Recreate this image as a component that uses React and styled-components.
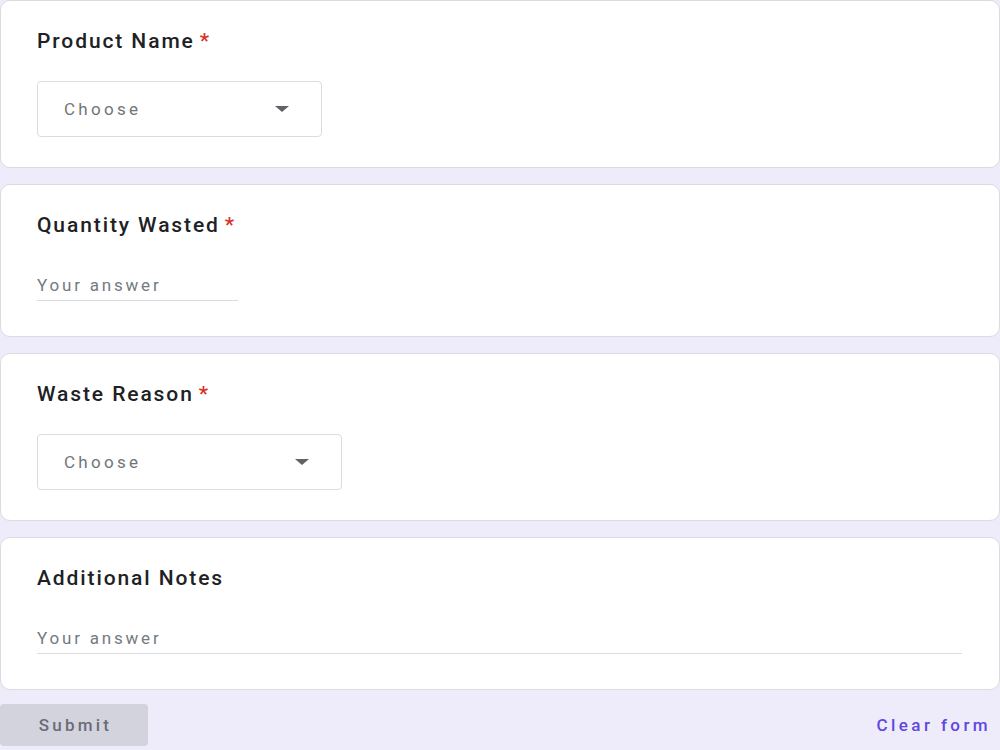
import React from "react";
import styled, { createGlobalStyle } from "styled-components";

const Global = createGlobalStyle`
  html, body { margin: 0; padding: 0; background: #eeecfa; }
  body { font-family: Roboto, "Liberation Sans", Arial, sans-serif; }
  * { box-sizing: border-box; }
`;

const Page = styled.div`
  width: 1000px;
  height: 750px;
  overflow: hidden;
  background: #eeecfa;
`;

const Form = styled.div`
  display: flex;
  flex-direction: column;
  gap: 16px;
`;

const Card = styled.section`
  background: #ffffff;
  border: 1px solid #dadce0;
  border-radius: 10px;
  padding: 27px 37px ${(p) => p.$pb || 35}px 36px;
  display: flex;
  flex-direction: column;
  align-items: flex-start;
`;

const Title = styled.div`
  font-size: 21px;
  line-height: 26px;
  font-weight: 500;
  letter-spacing: 1.9px;
  color: #202124;
`;

const Star = styled.span`
  color: #d93025;
  margin-left: 5px;
`;

const Select = styled.div`
  margin-top: 27px;
  width: ${(p) => p.$w}px;
  height: 56px;
  border: 1px solid #dadce0;
  border-radius: 4px;
  display: flex;
  align-items: center;
  justify-content: space-between;
  padding: 0 32px 0 26px;
`;

const SelectText = styled.span`
  font-size: 17px;
  letter-spacing: 3.3px;
  color: #70757a;
`;

const Caret = styled.span`
  width: 0;
  height: 0;
  border-left: 7px solid transparent;
  border-right: 7px solid transparent;
  border-top: 6px solid #5f6368;
`;

const Answer = styled.div`
  margin-top: 35px;
  width: ${(p) => (p.$full ? "100%" : `${p.$w}px`)};
  font-size: 17px;
  line-height: 24px;
  letter-spacing: 2.8px;
  color: #757a80;
  padding-bottom: 3px;
  border-bottom: 1px solid #dadce0;
`;

const Footer = styled.div`
  display: flex;
  justify-content: space-between;
  align-items: center;
  margin-top: 14px;
  padding-right: 9px;
`;

const Submit = styled.button`
  width: 148px;
  height: 42px;
  border: none;
  border-radius: 4px;
  background: #d3d3de;
  color: #6b6b78;
  font-family: Roboto, "Liberation Sans", Arial, sans-serif;
  font-size: 17px;
  font-weight: 500;
  letter-spacing: 3.2px;
  padding: 0 0 0 3px;
`;

const Clear = styled.button`
  border: none;
  background: none;
  padding: 0;
  color: #5f47e0;
  font-family: Roboto, "Liberation Sans", Arial, sans-serif;
  font-size: 17px;
  font-weight: 500;
  letter-spacing: 3.4px;
`;

export default function App() {
  return (
    <Page>
      <Global />
      <Form>
        <Card $pb={30}>
          <Title>
            Product Name<Star>*</Star>
          </Title>
          <Select $w={285}>
            <SelectText>Choose</SelectText>
            <Caret />
          </Select>
        </Card>
        <Card>
          <Title>
            Quantity Wasted<Star>*</Star>
          </Title>
          <Answer $w={201}>Your answer</Answer>
        </Card>
        <Card $pb={30}>
          <Title>
            Waste Reason<Star>*</Star>
          </Title>
          <Select $w={305}>
            <SelectText>Choose</SelectText>
            <Caret />
          </Select>
        </Card>
        <Card>
          <Title>Additional Notes</Title>
          <Answer $full>Your answer</Answer>
        </Card>
      </Form>
      <Footer>
        <Submit>Submit</Submit>
        <Clear>Clear form</Clear>
      </Footer>
    </Page>
  );
}
